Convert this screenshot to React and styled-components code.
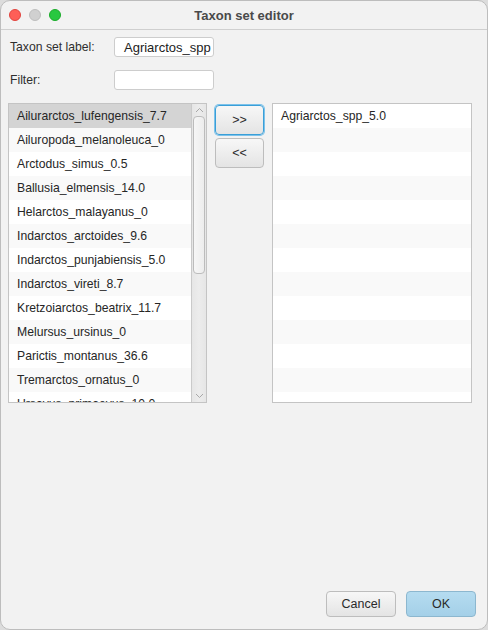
import React from "react";
import styled, { createGlobalStyle } from "styled-components";

const leftItems = [
  "Ailurarctos_lufengensis_7.7",
  "Ailuropoda_melanoleuca_0",
  "Arctodus_simus_0.5",
  "Ballusia_elmensis_14.0",
  "Helarctos_malayanus_0",
  "Indarctos_arctoides_9.6",
  "Indarctos_punjabiensis_5.0",
  "Indarctos_vireti_8.7",
  "Kretzoiarctos_beatrix_11.7",
  "Melursus_ursinus_0",
  "Parictis_montanus_36.6",
  "Tremarctos_ornatus_0",
  "Ursavus_primaevus_10.0",
];

const rightItems = ["Agriarctos_spp_5.0"];

const GlobalStyle = createGlobalStyle`
  html, body {
    margin: 0;
    padding: 0;
    background: #dcdcdc;
  }
  body {
    font-family: "Liberation Sans", Arial, sans-serif;
    font-size: 12.2px;
    color: #262626;
  }
`;

const Window = styled.div`
  width: 488px;
  height: 630px;
  box-sizing: border-box;
  background: #f2f2f2;
  border: 1px solid #bdbdbd;
  border-radius: 10px;
  overflow: hidden;
  display: flex;
  flex-direction: column;
`;

const TitleBar = styled.div`
  height: 28px;
  flex: none;
  display: flex;
  align-items: center;
  position: relative;
  border-bottom: 1px solid #cfcfcf;
  padding-left: 8px;
  gap: 8px;
`;

const Light = styled.span`
  width: 12px;
  height: 12px;
  border-radius: 50%;
  background: ${(p) => p.color};
  border: 0.5px solid ${(p) => p.rim};
  box-sizing: border-box;
`;

const Title = styled.div`
  position: absolute;
  left: 0;
  right: 0;
  text-align: center;
  font-weight: bold;
  font-size: 13px;
  color: #4a4a4a;
  pointer-events: none;
`;

const Content = styled.div`
  flex: 1;
  display: flex;
  flex-direction: column;
  padding: 7px 14px 12px 7px;
`;

const Form = styled.div`
  display: grid;
  grid-template-columns: 104px 100px;
  grid-auto-rows: 20px;
  row-gap: 13px;
  align-items: center;
  padding-left: 2px;
`;

const Label = styled.label`
  color: #2e2e2e;
`;

const Field = styled.div`
  height: 20px;
  box-sizing: border-box;
  background: #fff;
  border: 1px solid #cdcdcd;
  border-radius: 3px;
  padding: 0 9px;
  display: flex;
  align-items: center;
  overflow: hidden;
  white-space: nowrap;
  font-size: 13px;
  color: #222;
`;

const Lists = styled.div`
  display: flex;
  margin-top: 13px;
  height: 300px;
  gap: 8px;
`;

const ListBox = styled.div`
  width: ${(p) => p.width}px;
  flex: none;
  box-sizing: border-box;
  border: 1px solid #c4c4c4;
  background: #fff;
  display: flex;
  overflow: hidden;
`;

const Rows = styled.div`
  flex: 1;
  overflow: hidden;
  background: repeating-linear-gradient(
    to bottom,
    #fff 0,
    #fff 24px,
    #f9f9f9 24px,
    #f9f9f9 48px
  );
`;

const Row = styled.div`
  height: 24px;
  line-height: 24px;
  padding-left: 8px;
  white-space: nowrap;
  background: ${(p) => (p.selected ? "#d4d4d4" : p.odd ? "#f9f9f9" : "#fff")};
`;

const ScrollBar = styled.div`
  width: 15px;
  flex: none;
  box-sizing: border-box;
  background: linear-gradient(to right, #e6e6e6, #ececec 50%, #e6e6e6);
  border-left: 1px solid #cacaca;
  display: flex;
  flex-direction: column;
  align-items: center;
`;

const Arrow = styled.svg`
  flex: none;
  display: block;
  margin: 3px 0;
`;

const Thumb = styled.div`
  width: 12px;
  height: 158px;
  box-sizing: border-box;
  background: linear-gradient(to right, #f6f6f6, #ededed);
  border: 1px solid #bcbcbc;
  border-radius: 4px;
`;

const Track = styled.div`
  flex: 1;
`;

const Transfer = styled.div`
  display: flex;
  flex-direction: column;
  gap: 3px;
  padding-top: 2px;
`;

const Button = styled.button`
  width: ${(p) => p.width || 49}px;
  height: ${(p) => p.height || 30}px;
  box-sizing: border-box;
  font-family: "Liberation Sans", Arial, sans-serif;
  font-size: 12.5px;
  color: #2a2a2a;
  border-radius: 4px;
  padding: 0;
  border: 1px solid ${(p) => (p.focused ? "#3a9fd8" : p.primary ? "#8cb7cf" : "#bdbdbd")};
  box-shadow: ${(p) => (p.focused ? "0 0 0 1px #7cc2ea" : "none")};
  background: ${(p) =>
    p.primary
      ? "linear-gradient(to bottom, #b5dcf0, #a4d0e8)"
      : "linear-gradient(to bottom, #f7f7f7, #e4e4e4)"};
`;

const Spacer = styled.div`
  flex: 1;
`;

const Footer = styled.div`
  display: flex;
  justify-content: flex-end;
  gap: 10px;
  margin-right: -3px;
`;

function ChevronUp() {
  return (
    <Arrow width="9" height="6" viewBox="0 0 9 6">
      <path d="M1 5 L4.5 1.5 L8 5" fill="none" stroke="#a8a8a8" strokeWidth="1" />
    </Arrow>
  );
}

function ChevronDown() {
  return (
    <Arrow width="9" height="6" viewBox="0 0 9 6">
      <path d="M1 1 L4.5 4.5 L8 1" fill="none" stroke="#a8a8a8" strokeWidth="1" />
    </Arrow>
  );
}

export default function App() {
  return (
    <>
      <GlobalStyle />
      <Window>
        <TitleBar>
          <Light color="#fe5f57" rim="#e0443e" />
          <Light color="#d0d0d0" rim="#bdbdbd" />
          <Light color="#28c840" rim="#1aab29" />
          <Title>Taxon set editor</Title>
        </TitleBar>
        <Content>
          <Form>
            <Label>Taxon set label:</Label>
            <Field>Agriarctos_spp</Field>
            <Label>Filter:</Label>
            <Field />
          </Form>
          <Lists>
            <ListBox width={199}>
              <Rows>
                {leftItems.map((name, i) => (
                  <Row key={name} selected={i === 0} odd={i % 2 === 1}>
                    {name}
                  </Row>
                ))}
              </Rows>
              <ScrollBar>
                <ChevronUp />
                <Thumb />
                <Track />
                <ChevronDown />
              </ScrollBar>
            </ListBox>
            <Transfer>
              <Button focused>&gt;&gt;</Button>
              <Button>&lt;&lt;</Button>
            </Transfer>
            <ListBox width={200}>
              <Rows>
                {rightItems.map((name) => (
                  <Row key={name}>{name}</Row>
                ))}
              </Rows>
            </ListBox>
          </Lists>
          <Spacer />
          <Footer>
            <Button width={70} height={26}>Cancel</Button>
            <Button width={70} height={26} primary>OK</Button>
          </Footer>
        </Content>
      </Window>
    </>
  );
}
